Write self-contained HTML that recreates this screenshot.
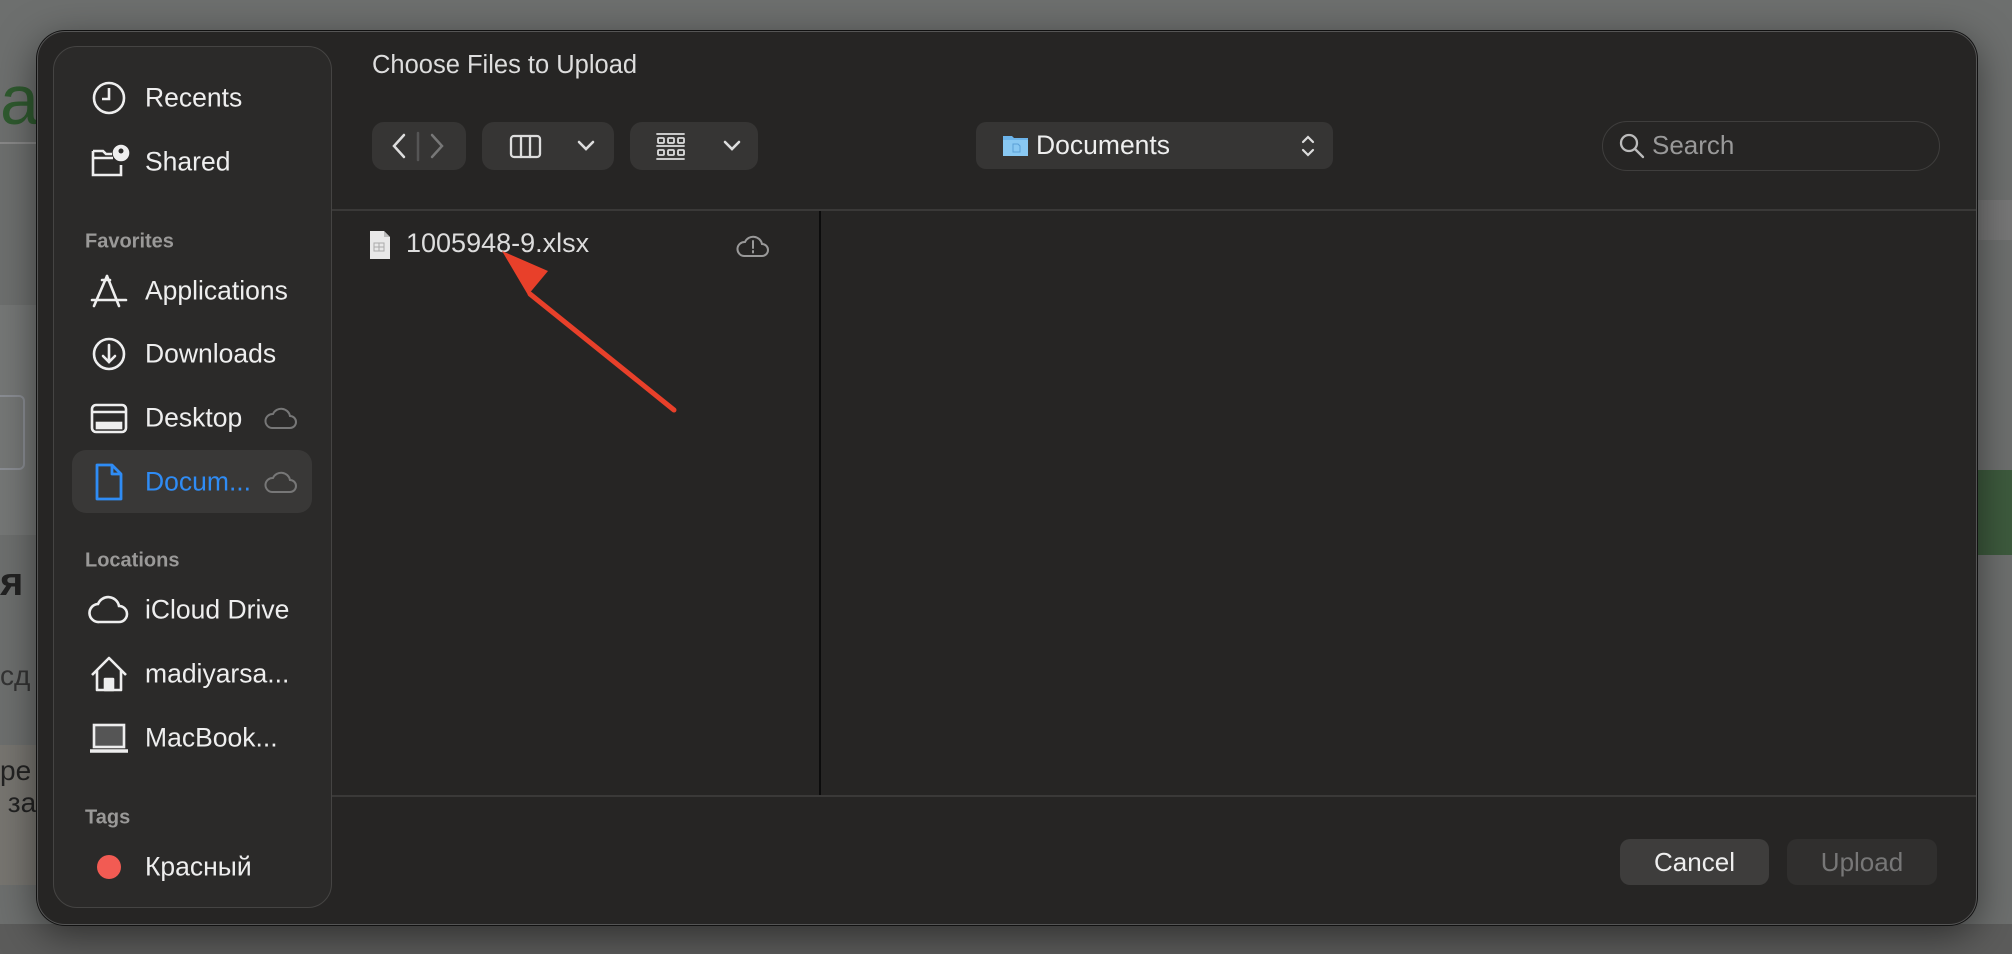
<!DOCTYPE html>
<html><head><meta charset="utf-8"><style>
*{margin:0;padding:0;box-sizing:border-box}
body{width:2012px;height:954px;overflow:hidden;background:#6d6f6e;font-family:"Liberation Sans","DejaVu Sans",sans-serif;position:relative}
.abs{position:absolute}
.dlg{left:37px;top:31px;width:1940px;height:894px;background:#262524;border-radius:28px;border:1px solid #555;box-shadow:0 0 0 1px #111,0 10px 40px rgba(0,0,0,.5)}
.side{left:53px;top:46px;width:279px;height:862px;background:#2b2a29;border:1px solid #454443;border-radius:24px}
.it{position:absolute;left:145px;font-size:26.5px;color:#eee;transform:translateY(-50%);white-space:nowrap}
.hd{position:absolute;left:85px;font-size:20px;color:#9a9998;font-weight:bold;transform:translateY(-50%)}
.ic{position:absolute;left:88px;width:42px;height:42px;transform:translateY(-50%)}
.grp{background:#363534;border-radius:12px;top:122px;height:48px}
.btn{top:839px;height:46px;border-radius:10px;font-size:26px;display:flex;align-items:center;justify-content:center}
</style></head><body>
<div class="abs" style="left:0;top:60px;font-size:70px;color:#2f5a2f">a</div>
<div class="abs" style="left:0;top:142px;width:40px;height:2px;background:#888"></div>
<div class="abs" style="left:0;top:305px;width:40px;height:230px;background:#757776"></div>
<div class="abs" style="left:0;top:395px;width:25px;height:75px;border:2px solid #8a8d93;border-left:none;border-radius:0 6px 6px 0"></div>
<div class="abs" style="left:0;top:560px;font-size:40px;color:#222;font-weight:bold">я</div>
<div class="abs" style="left:0;top:660px;font-size:28px;color:#333">сд</div>
<div class="abs" style="left:0;top:745px;width:40px;height:140px;background:#777570"></div>
<div class="abs" style="left:0;top:755px;font-size:28px;color:#222">ре<br>&nbsp;за</div>
<div class="abs" style="left:1976px;top:470px;width:40px;height:85px;background:#3d5a3d"></div>
<div class="abs" style="left:1976px;top:200px;width:40px;height:40px;background:#777"></div>
<div class="abs" style="left:0;top:924px;width:2012px;height:30px;background:#5c5c5b"></div>

<div class="abs dlg"></div>
<div class="abs side"></div>
<div class="abs" style="left:372px;top:51px;font-size:25.5px;color:#ddd">Choose Files to Upload</div>

<svg class="ic" style="top:98px" viewBox="0 0 42 42" fill="none" stroke="#eee" stroke-width="2.6"><circle cx="21" cy="21" r="15"/><path d="M21 11v11h-7"/></svg>
<div class="it" style="top:98px">Recents</div>
<svg class="ic" style="top:162px" viewBox="0 0 42 42" fill="none" stroke="#eee" stroke-width="2.6"><path d="M5 10h10l3 3h6M5 10v24h28v-10"/><path d="M5 17h20"/><circle cx="33" cy="12" r="7" fill="#eee"/><circle cx="33" cy="10" r="2.5" fill="#2b2a29" stroke="none"/></svg>
<div class="it" style="top:162px">Shared</div>
<div class="hd" style="top:242px">Favorites</div>
<svg class="ic" style="top:291px" viewBox="0 0 42 42" fill="none" stroke="#eee" stroke-width="2.6" stroke-linecap="round"><path d="M19 6l-13 30M19 6l12 30M4 30h34M14 10l8 0"/></svg>
<div class="it" style="top:291px">Applications</div>
<svg class="ic" style="top:354px" viewBox="0 0 42 42" fill="none" stroke="#eee" stroke-width="2.6" stroke-linecap="round"><circle cx="21" cy="21" r="15"/><path d="M21 12v17M15 23l6 6 6-6"/></svg>
<div class="it" style="top:354px">Downloads</div>
<svg class="ic" style="top:418px" viewBox="0 0 42 42" fill="none" stroke="#eee" stroke-width="2.6"><rect x="4" y="8" width="34" height="27" rx="4"/><path d="M4 15h34"/><rect x="9" y="26" width="24" height="5" fill="#eee"/></svg>
<div class="it" style="top:418px">Desktop</div>
<svg class="abs" style="left:264px;top:405px" width="34" height="26" viewBox="0 0 34 26" fill="none" stroke="#777" stroke-width="2"><path d="M8 23h18a6 6 0 0 0 0-12 9 9 0 0 0-17-2 7 7 0 0 0-1 14z"/></svg>
<div class="abs" style="left:72px;top:450px;width:240px;height:63px;background:#393837;border-radius:14px"></div>
<svg class="ic" style="top:482px" viewBox="0 0 42 42" fill="none" stroke="#2f8cf5" stroke-width="2.8" stroke-linejoin="round"><path d="M9 4h15l9 9v25H9z"/><path d="M24 4v9h9"/></svg>
<div class="it" style="top:482px;color:#2f8cf5">Docum...</div>
<svg class="abs" style="left:264px;top:469px" width="34" height="26" viewBox="0 0 34 26" fill="none" stroke="#777" stroke-width="2"><path d="M8 23h18a6 6 0 0 0 0-12 9 9 0 0 0-17-2 7 7 0 0 0-1 14z"/></svg>
<div class="hd" style="top:561px">Locations</div>
<svg class="ic" style="top:610px" viewBox="0 0 42 42" fill="none" stroke="#eee" stroke-width="2.6"><path d="M11 33h20a8 8 0 0 0 0-16 11 11 0 0 0-21-2 9 9 0 0 0 1 18z"/></svg>
<div class="it" style="top:610px">iCloud Drive</div>
<svg class="ic" style="top:674px" viewBox="0 0 42 42" fill="none" stroke="#eee" stroke-width="2.6" stroke-linejoin="round"><path d="M4 22L21 5l17 17M9 17v20h24V17"/><rect x="17" y="26" width="8" height="11" fill="#eee"/></svg>
<div class="it" style="top:674px">madiyarsa...</div>
<svg class="ic" style="top:738px" viewBox="0 0 42 42" fill="none" stroke="#eee" stroke-width="2.6"><rect x="6" y="8" width="30" height="22" fill="#555"/><path d="M2 34h38" stroke-width="3.5"/></svg>
<div class="it" style="top:738px">MacBook...</div>
<div class="hd" style="top:818px">Tags</div>
<div class="abs" style="left:97px;top:855px;width:24px;height:24px;border-radius:50%;background:#f25b53"></div>
<div class="it" style="top:867px">Красный</div>

<div class="abs grp" style="left:372px;width:94px"></div>
<svg class="abs" style="left:372px;top:122px" width="94" height="48" viewBox="0 0 94 48" fill="none" stroke-width="2.5" stroke-linecap="round"><path d="M32 13l-10 11 10 11" stroke="#ddd"/><path d="M46 11v27" stroke="#555"/><path d="M60 13l10 11-10 11" stroke="#777"/></svg>
<div class="abs grp" style="left:482px;width:132px"></div>
<svg class="abs" style="left:482px;top:122px" width="132" height="48" viewBox="0 0 132 48" fill="none" stroke="#ddd" stroke-width="2.3" stroke-linecap="round"><rect x="29" y="14" width="29" height="21" rx="3"/><path d="M39 14v21M48 14v21"/><path d="M97 20l7 7 7-7" stroke-width="2.6"/></svg>
<div class="abs grp" style="left:630px;width:128px"></div>
<svg class="abs" style="left:630px;top:122px" width="128" height="48" viewBox="0 0 128 48" fill="none" stroke="#ddd" stroke-width="1.8" stroke-linecap="round"><path d="M27 12h27M27 24h27M27 37h27"/><rect x="28" y="16" width="6" height="5" rx="1"/><rect x="38" y="16" width="6" height="5" rx="1"/><rect x="48" y="16" width="6" height="5" rx="1"/><rect x="28" y="28" width="6" height="5" rx="1"/><rect x="38" y="28" width="6" height="5" rx="1"/><rect x="48" y="28" width="6" height="5" rx="1"/><path d="M95 20l7 7 7-7" stroke-width="2.6"/></svg>
<div class="abs" style="left:976px;top:122px;width:357px;height:47px;background:#363534;border-radius:10px"></div>
<svg class="abs" style="left:1002px;top:132px" width="28" height="26" viewBox="0 0 28 26"><path d="M1 4h9l2 2h14v18H1z" fill="#6cb4ea"/><path d="M1 8h25v16H1z" fill="#89c8f2"/><path d="M11 12h5l2 2v6h-7z" fill="none" stroke="#5a9fd6" stroke-width="1"/></svg>
<div class="abs" style="left:1036px;top:130px;font-size:26.5px;color:#eee">Documents</div>
<svg class="abs" style="left:1300px;top:133px" width="16" height="26" viewBox="0 0 16 26" fill="none" stroke="#ddd" stroke-width="2.2" stroke-linecap="round"><path d="M3 9l5-5 5 5M3 17l5 5 5-5"/></svg>
<div class="abs" style="left:1602px;top:121px;width:338px;height:50px;border:1.5px solid #3f3e3d;border-radius:25px"></div>
<svg class="abs" style="left:1618px;top:132px" width="28" height="28" viewBox="0 0 28 28" fill="none" stroke="#bbb" stroke-width="2.3" stroke-linecap="round"><circle cx="11" cy="11" r="8"/><path d="M17 17l8 8"/></svg>
<div class="abs" style="left:1652px;top:130px;font-size:26px;color:#999">Search</div>

<div class="abs" style="left:332px;top:209px;width:1644px;height:2px;background:#3a3938"></div>
<div class="abs" style="left:819px;top:211px;width:2px;height:584px;background:#0c0c0c"></div>
<div class="abs" style="left:332px;top:795px;width:1644px;height:2px;background:#3a3938"></div>

<svg class="abs" style="left:368px;top:230px" width="24" height="30" viewBox="0 0 24 30"><path d="M2 1h14l6 6v22H2z" fill="#e8e8e8"/><path d="M16 1v6h6" fill="#bbb"/><path d="M6 13h10v8H6zM6 17h10M11 13v8" fill="none" stroke="#aaa" stroke-width="1"/></svg>
<div class="abs" style="left:406px;top:228px;font-size:27px;color:#ddd">1005948-9.xlsx</div>
<svg class="abs" style="left:736px;top:232px" width="34" height="26" viewBox="0 0 34 26" fill="none" stroke="#999" stroke-width="2"><path d="M8 24h18a6 6 0 0 0 0-12 9 9 0 0 0-17-2 7 7 0 0 0-1 14z"/><path d="M17 9v7M17 19v1.5" stroke-linecap="round"/></svg>

<svg class="abs" style="left:0;top:0" width="2012" height="954" viewBox="0 0 2012 954"><path d="M674 410L530 294" stroke="#e8402a" stroke-width="5" stroke-linecap="round"/><path d="M502 251l46 20-20 24z" fill="#e8402a"/></svg>

<div class="abs btn" style="left:1620px;width:149px;background:#3e3d3c;color:#eee">Cancel</div>
<div class="abs btn" style="left:1787px;width:150px;background:#302f2e;color:#777">Upload</div>
</body></html>
